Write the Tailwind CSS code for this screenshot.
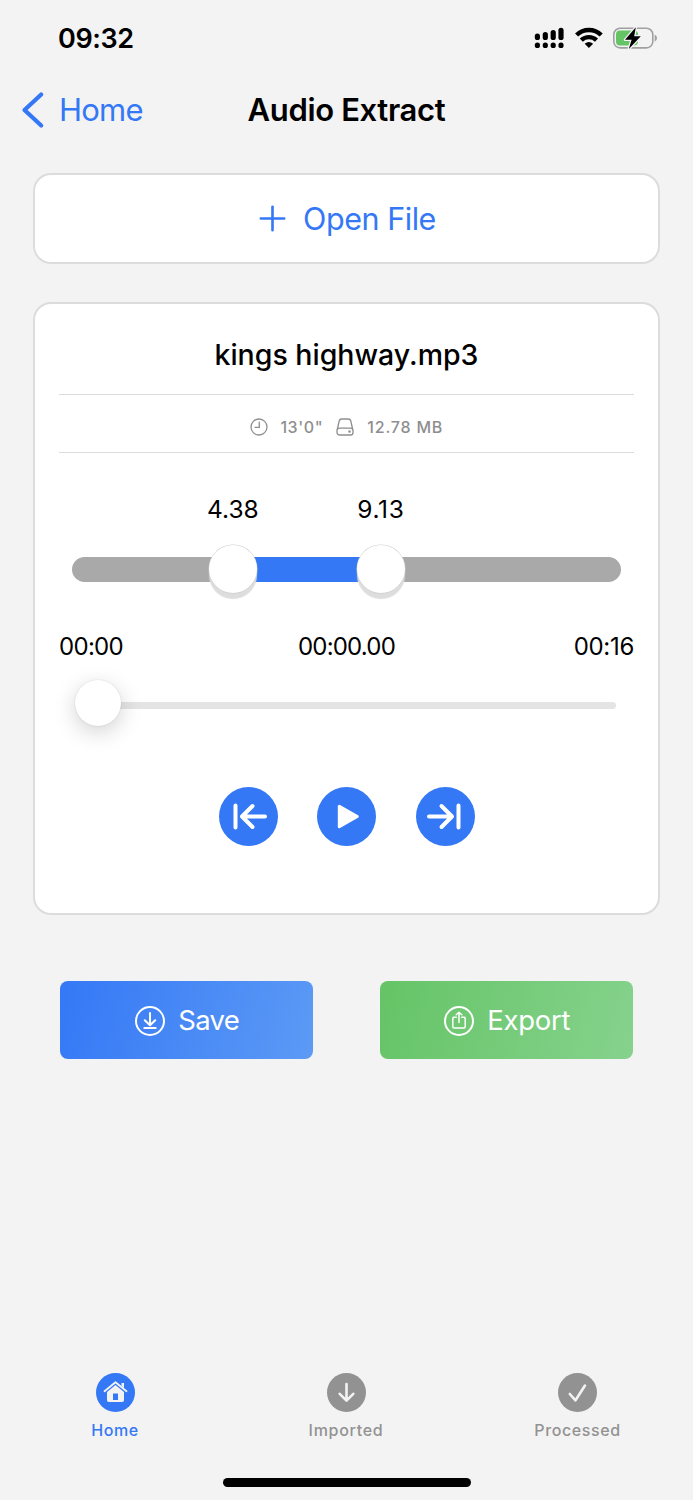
<!DOCTYPE html>
<html lang="en">
<head>
<meta charset="utf-8">
<title>Audio Extract</title>
<script src="https://cdn.jsdelivr.net/npm/@tailwindcss/browser@4"></script>
</head>
<body class="flex h-[1500px] w-[693px] flex-col overflow-hidden bg-[#f3f3f3] font-['Inter','Liberation_Sans',sans-serif] text-black">
  <header class="flex h-[76px] items-center justify-between pr-[35px] pl-[58px]">
    <span class="text-[27px] leading-none font-semibold tracking-[-0.4px]">09:32</span>
    <div class="flex items-center pt-[4px]">
      <svg class="h-[50px] w-[138px]" viewBox="0 0 138 50">
        <g stroke="#000" stroke-width="5.200" stroke-linecap="round">
          <path d="M17.400 21.200v1.300M25.300 19.500v3M33.200 17.500v5M41 15.300v7.200"/>
          <path d="M17.400 30.200v.3M25.300 30.200v.3M33.200 30.200v.3M41 30.200v.3"/>
        </g>
        <g fill="none" stroke="#000" stroke-width="4.400">
          <path d="M56.600 20a17.500 17.500 0 0 1 24.600 0"/>
          <path d="M61.300 25.200a11 11 0 0 1 15.200 0"/>
        </g>
        <path d="M64.700 28.800q4.200-3.600 8.400 0L68.900 33z"/>
        <rect x="93.8" y="13.3" width="39" height="19.6" rx="6.3" fill="none" stroke="#a0a0a0" stroke-width="1.6"/>
        <path d="M134.700 19.500q2.300 1 2.300 3.600t-2.300 3.600z" fill="#a0a0a0"/>
        <rect x="96" y="15.600" width="22" height="15" rx="4" fill="#65c466"/>
        <path d="M115.800 12.300L105 24.800h6.600L108.800 34L120.800 21.200h-6.600z" fill="#000" stroke="#f3f3f3" stroke-width="2.600" stroke-linejoin="round" paint-order="stroke"/>
      </svg>
    </div>
  </header>
  <nav class="grid h-[67px] grid-cols-3 items-center px-[20px]">
    <a class="flex items-center text-[#3478f6]">
      <svg class="h-[40px] w-[39px]" viewBox="0 0 39 40" fill="none" stroke="#3478f6" stroke-width="4.200" stroke-linecap="round" stroke-linejoin="round"><path d="M21.200 4.500L4.500 20L21.200 35.500"/></svg>
      <span class="text-[31px] leading-none font-normal tracking-[-0.8px]">Home</span>
    </a>
    <h1 class="justify-self-center text-[31px] leading-none font-semibold tracking-[-0.35px] whitespace-nowrap">Audio Extract</h1>
  </nav>
  <button class="mx-[33px] mt-[30px] flex h-[91px] items-center justify-center rounded-[18px] border-2 border-[#dcdcdc] bg-white pl-[2px] text-[#3478f6]">
    <svg class="mr-[17px] size-[27px]" viewBox="0 0 27 27" stroke="#3478f6" stroke-width="2.600" stroke-linecap="round"><path d="M13.500 1.800v23.400M1.800 13.500h23.400"/></svg>
    <span class="pt-[1px] text-[30.500px] leading-none tracking-[-0.45px]">Open File</span>
  </button>
  <main class="mx-[33px] mt-[38px] flex h-[613px] flex-col rounded-[18px] border-2 border-[#dcdcdc] bg-white px-[24px]">
    <h2 class="flex h-[91px] items-center justify-center border-b border-[#dcdcdc] pt-[12px] text-[28.500px] leading-none font-medium"><span>kings highway.mp3</span></h2>
    <div class="flex h-[58px] items-center justify-center border-b border-[#dcdcdc] pt-[7px] text-[16px] leading-none font-medium text-[#8e8e90]">
      <svg class="mr-[12.500px] size-[18px]" viewBox="0 0 18 18" fill="none" stroke="currentColor" stroke-width="1.300" stroke-linecap="round"><circle cx="9" cy="9" r="8"/><path d="M9.300 4.200V9.300H5"/></svg>
      <span class="tracking-[0.6px]">13'0"</span>
      <svg class="mr-[13px] ml-[13px] size-[18px]" viewBox="0 0 18 18" fill="none" stroke="currentColor" stroke-width="1.300" stroke-linejoin="round"><path d="M1.300 11.500L3.200 3Q3.700 1 5.600 1h6.800Q14.300 1 14.800 3L16.700 11.500"/><rect x="1" y="10.200" width="16" height="6.800" rx="2.600"/><circle cx="13.500" cy="13.600" r=".6" fill="currentColor"/></svg>
      <span class="tracking-[0.8px]">12.78 MB</span>
    </div>
    <div class="flex h-[104px] pt-[44px] text-[24.500px] leading-none">
      <span class="ml-[148px]">4.38</span>
      <span class="ml-[98.500px] tracking-[0.7px]">9.13</span>
    </div>
    <div class="relative mx-[13px] flex h-[25px] shrink-0 rounded-full bg-[#a9a9a9]">
      <div class="ml-[161px] h-full w-[148px] bg-[#3478f6]"></div>
      <i class="absolute -top-[12px] left-[137px] size-[48px] rounded-full bg-white shadow-[0_0_0_0.5px_#cccccc,0_6px_1px_#dddddd]"></i>
      <i class="absolute -top-[12px] left-[285px] size-[48px] rounded-full bg-white shadow-[0_0_0_0.5px_#cccccc,0_6px_1px_#dddddd]"></i>
    </div>
    <div class="mt-[53px] grid grid-cols-3 text-[24px] leading-none">
      <span class="justify-self-start tracking-[-0.7px]">00:00</span><span class="justify-self-center tracking-[-0.8px]">00:00.00</span><span class="justify-self-end tracking-[-0.3px]">00:16</span>
    </div>
    <div class="relative mt-[43px] mr-[18px] ml-[17px] h-[7px] rounded-full bg-[#e4e4e4]">
      <i class="absolute -top-[22px] -left-[1px] size-[46px] rounded-full bg-white shadow-[0_0_2px_rgba(0,0,0,0.12),0_6px_22px_rgba(0,0,0,0.18)]"></i>
    </div>
    <div class="mt-[78px] flex justify-center gap-[39.500px]">
      <svg class="size-[59px]" viewBox="0 0 59 59" fill="none" stroke="#fff" stroke-width="4" stroke-linecap="round" stroke-linejoin="round"><circle cx="29.500" cy="29.500" r="29.500" fill="#3478f6" stroke="none"/><path d="M16.500 18.500v22M46 29.500H23M33.500 19L23 29.500L33.500 40"/></svg>
      <svg class="size-[59px]" viewBox="0 0 59 59"><circle cx="29.500" cy="29.500" r="29.500" fill="#3478f6"/><path d="M22.300 19.300V39.700L40.300 29.500z" fill="#fff" stroke="#fff" stroke-width="3" stroke-linejoin="round"/></svg>
      <svg class="size-[59px]" viewBox="0 0 59 59" fill="none" stroke="#fff" stroke-width="4" stroke-linecap="round" stroke-linejoin="round"><circle cx="29.500" cy="29.500" r="29.500" fill="#3478f6" stroke="none"/><path d="M42.500 18.500v22M13 29.500H36M25.500 19L36 29.500L25.500 40"/></svg>
    </div>
  </main>
  <div class="mt-[66px] flex justify-between px-[60px] text-[27.500px] leading-none text-white">
    <button class="flex h-[78px] w-[253px] items-center justify-center rounded-[8px] bg-linear-[105deg] from-[#3478f6] to-[#5c9af5] pt-[1px]">
      <svg class="mr-[12.500px] size-[32px]" viewBox="0 0 32 32" fill="none" stroke="#fff" stroke-width="2" stroke-linecap="round" stroke-linejoin="round"><circle cx="16" cy="16" r="14"/><path d="M16 8v12M10.800 15.200L16 20.300l5.200-5.100M10.300 23h11.400"/></svg>
      <span class="pt-[1px] tracking-[-0.7px]">Save</span>
    </button>
    <button class="flex h-[78px] w-[253px] items-center justify-center rounded-[8px] bg-linear-[105deg] from-[#65c466] to-[#86d28d] pt-[1px]">
      <svg class="mr-[12.500px] size-[32px]" viewBox="0 0 32 32" fill="none" stroke="#fff" stroke-width="1.500" stroke-linecap="round" stroke-linejoin="round"><circle cx="16" cy="16" r="14" stroke-width="2"/><path d="M13.300 12.300H11Q9.800 12.300 9.800 13.500V21.700Q9.800 22.900 11 22.900H21Q22.200 22.900 22.200 21.700V13.500Q22.200 12.300 21 12.300H18.700M16 17.500V7.500M13.200 9.800L16 7.200L18.800 9.800"/></svg>
      <span class="pt-[1px] tracking-[-0.3px]">Export</span>
    </button>
  </div>
  <footer class="mt-auto grid grid-cols-3 text-[16px] leading-none font-medium text-[#929292]">
    <a class="flex flex-col items-center gap-[10px] pr-px text-[#3478f6]">
      <svg class="size-[39px]" viewBox="0 0 39 39"><circle cx="19.500" cy="19.500" r="19.500" fill="#3478f6"/><path d="M8.500 18.300L19.500 9.300L30.500 18.300" fill="none" stroke="#f3f3f3" stroke-width="1.800" stroke-linecap="round" stroke-linejoin="round"/><path d="M25.500 10h2.500v5l-2.500-2z" fill="#f3f3f3"/><path fill-rule="evenodd" fill="#f3f3f3" d="M19.500 12L28 19V27.200Q28 29 26.200 29H12.800Q11 29 11 27.200V19zM17 20.500V27H22V20.500z"/></svg>
      <span class="tracking-[0.6px]">Home</span>
    </a>
    <a class="flex flex-col items-center gap-[10px] pr-px">
      <svg class="size-[39px]" viewBox="0 0 39 39"><circle cx="19.500" cy="19.500" r="19.500" fill="#929292"/><path d="M19.500 11V27.500M12.700 20.800L19.500 27.700L26.300 20.800" fill="none" stroke="#f3f3f3" stroke-width="2.600" stroke-linecap="round" stroke-linejoin="round"/></svg>
      <span class="tracking-[0.7px]">Imported</span>
    </a>
    <a class="flex flex-col items-center gap-[10px]">
      <svg class="size-[39px]" viewBox="0 0 39 39"><circle cx="19.500" cy="19.500" r="19.500" fill="#929292"/><path d="M11.800 21L17.500 27.300L27 12.500" fill="none" stroke="#f3f3f3" stroke-width="2.600" stroke-linecap="round" stroke-linejoin="round"/></svg>
      <span class="tracking-[0.6px]">Processed</span>
    </a>
  </footer>
  <div class="mx-auto mt-[40px] mb-[13px] h-[9px] w-[248px] shrink-0 rounded-full bg-black"></div>
</body>
</html>
